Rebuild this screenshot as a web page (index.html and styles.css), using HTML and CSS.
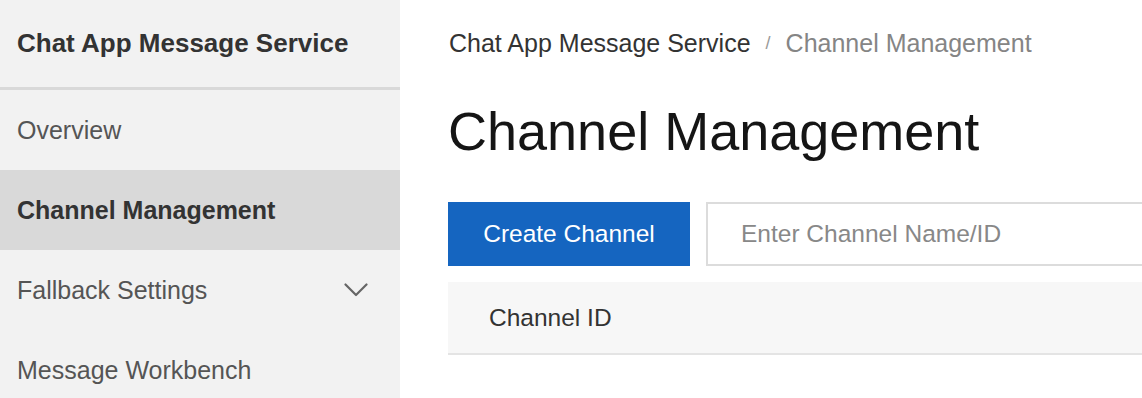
FILE: index.html
```html
<!DOCTYPE html>
<html lang="en">
<head>
<meta charset="utf-8">
<title>Channel Management</title>
<link rel="stylesheet" href="styles.css">
</head>
<body>
<div class="app">
  <aside class="sidebar">
    <div class="sidebar-header">Chat App Message Service</div>
    <nav class="nav">
      <div class="nav-item">Overview</div>
      <div class="nav-item active">Channel Management</div>
      <div class="nav-item has-sub">
        <span>Fallback Settings</span>
        <svg class="chevron" width="24" height="14" viewBox="0 0 24 14"><polyline points="1.5,1.5 12,12 22.5,1.5" fill="none" stroke="#666" stroke-width="2.2" stroke-linecap="round" stroke-linejoin="round"/></svg>
      </div>
      <div class="nav-item">Message Workbench</div>
    </nav>
  </aside>
  <main class="main">
    <div class="breadcrumb">
      <span class="crumb">Chat App Message Service</span>
      <span class="sep">/</span>
      <span class="crumb current">Channel Management</span>
    </div>
    <h1 class="title">Channel Management</h1>
    <div class="toolbar">
      <button class="btn-primary" type="button">Create Channel</button>
      <input class="search" type="text" placeholder="Enter Channel Name/ID">
    </div>
    <div class="table-head">
      <div class="th">Channel ID</div>
    </div>
  </main>
</div>
</body>
</html>
```

FILE: styles.css
```css
* { box-sizing: border-box; }

html, body {
  margin: 0;
  padding: 0;
  height: 100%;
  background: #ffffff;
  font-family: "Liberation Sans", Arial, Helvetica, sans-serif;
}

.app {
  display: flex;
  width: 1142px;
  height: 398px;
  overflow: hidden;
}

.sidebar {
  flex: 0 0 400px;
  background: #f2f2f2;
  display: flex;
  flex-direction: column;
  overflow: hidden;
}

.sidebar-header {
  flex: 0 0 90px;
  height: 90px;
  padding: 0 0 0 17px;
  display: flex;
  align-items: center;
  border-bottom: 3px solid #d9d9d9;
  font-size: 26px;
  font-weight: bold;
  color: #333333;
}

.nav {
  flex: 0 0 auto;
  display: flex;
  flex-direction: column;
}

.nav-item {
  flex: 0 0 80px;
  height: 80px;
  padding: 0 32px 0 17px;
  display: flex;
  align-items: center;
  justify-content: space-between;
  font-size: 25px;
  color: #555555;
}

.nav-item.active {
  background: #d9d9d9;
  font-weight: bold;
  color: #333333;
}

.chevron {
  display: block;
}

.main {
  flex: 1;
  min-width: 0;
  padding-left: 48px;
  overflow: hidden;
  background: #ffffff;
}

.breadcrumb {
  height: 86px;
  display: flex;
  align-items: center;
  padding-left: 1px;
  font-size: 25px;
  white-space: nowrap;
}

.crumb { color: #333333; }
.crumb.current { color: #858585; }

.sep {
  margin: 0 15px;
  font-size: 18px;
  color: #999999;
}

.title {
  margin: 13px 0 0 0;
  height: 64px;
  line-height: 64px;
  font-size: 54px;
  font-weight: normal;
  color: #151515;
  white-space: nowrap;
}

.toolbar {
  margin-top: 39px;
  display: flex;
  gap: 16px;
  height: 64px;
}

.btn-primary {
  flex: 0 0 242px;
  height: 64px;
  border: none;
  border-radius: 0;
  background: #1565c0;
  color: #ffffff;
  font-family: inherit;
  font-size: 24.5px;
  padding: 0;
}

.search {
  flex: 0 0 480px;
  height: 64px;
  border: 2px solid #dcdcdc;
  border-radius: 0;
  padding: 0 0 0 33px;
  font-family: inherit;
  font-size: 24.5px;
  color: #333333;
  background: #ffffff;
  outline: none;
}

.search::placeholder { color: #888888; }

.table-head {
  margin-top: 16px;
  height: 73px;
  background: #f7f7f7;
  border-bottom: 2px solid #e4e4e4;
  display: flex;
  align-items: center;
  padding-left: 41px;
}

.th {
  font-size: 24.5px;
  color: #333333;
}
```
